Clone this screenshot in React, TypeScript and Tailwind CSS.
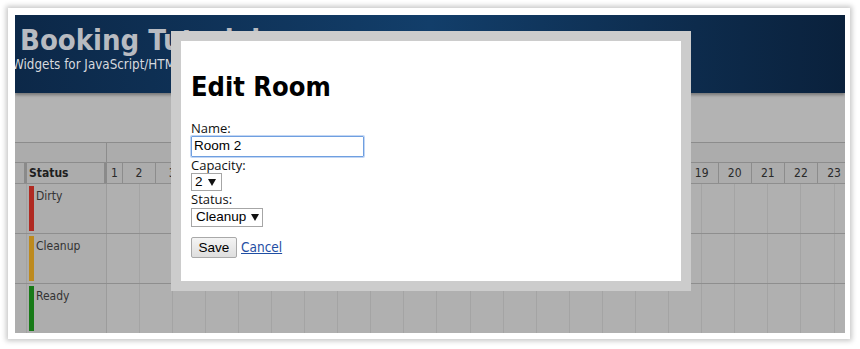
const tahoma = { fontFamily: '"DejaVu Sans Condensed", "Liberation Sans", sans-serif' }
const arial = { fontFamily: '"Liberation Sans", Arial, sans-serif' }

const rooms = [
  { name: "Dirty", bar: "bg-[#b02a22]" },
  { name: "Cleanup", bar: "bg-[#bd8a1e]" },
  { name: "Ready", bar: "bg-[#187a18]" },
]

const days = Array.from({ length: 22 }, (_, i) => i + 2)

function Arrow() {
  return (
    <svg width="8" height="7" viewBox="0 0 8 7" className="shrink-0">
      <polygon points="0,0 8,0 4,7" fill="#111" />
    </svg>
  )
}

export default function App() {
  return (
    <div className="w-[860px] h-[349px] bg-white overflow-hidden">
      <div className="ml-[8px] mt-[8px] w-[842px] h-[331px] bg-white pl-[7px] pt-[7px] shadow-[0_0_5px_2px_rgba(0,0,0,0.22)]">
        <div className="relative w-[830px] h-[318px] overflow-hidden bg-[#b3b3b3]" style={tahoma}>
          {/* Header */}
          <div className="relative z-10 h-[78px] bg-gradient-to-r from-[#0c2848] via-[#123e6a] to-[#0a213c] pl-[5px] pt-[8px] shadow-[0_2px_3px_rgba(0,0,0,0.35)]">
            <div className="text-[29px] font-bold leading-[34px] text-[#b8bbc1]">Booking Tutorial</div>
            <div className="-ml-[8px] mt-[0px] text-[13.3px] leading-[16px] text-[#d6d9de] whitespace-nowrap">Widgets for JavaScript/HTML5</div>
          </div>

          {/* Scheduler */}
          <div className="mt-[49px] text-[12px] text-[#2a2a2a]">
            <div className="flex h-[20px] border-t border-[#8c8c8c] bg-[#acacac]">
              <div className="w-[92px] shrink-0 border-r border-[#8c8c8c]" />
              <div className="flex-1" />
            </div>
            <div className="flex h-[21px] border-t border-[#8c8c8c] bg-[#acacac]">
              <div className="w-[92px] shrink-0 flex">
                <div className="w-[9px] shrink-0" />
                <div className="flex-1 flex items-center border-l-[3px] border-r-[3px] border-[#8a8a8a] pl-[2px] font-bold text-[#1e1e1e]">Status</div>
              </div>
              <div className="flex overflow-hidden">
                <div className="w-[16px] shrink-0 border-r border-[#8c8c8c] flex items-center justify-center">1</div>
                {days.map((d) => (
                  <div key={d} className="w-[33.1px] shrink-0 border-r border-[#8c8c8c] flex items-center justify-center">
                    {d}
                  </div>
                ))}
              </div>
            </div>
            {rooms.map((r) => (
              <div key={r.name} className="flex h-[50px] border-t border-[#8e8e8e] bg-[#b0b0b0]">
                <div className="w-[92px] shrink-0 flex border-r border-[#9c9c9c] bg-[#adadad]">
                  <div className="w-[12px] shrink-0 border-r border-[#a2a2a2]" />
                  <div className={`ml-[2px] my-[2px] w-[5px] shrink-0 ${r.bar}`} />
                  <div className="pl-[2px] pt-[4px] leading-[16px] text-[#333]">{r.name}</div>
                </div>
                <div className="flex overflow-hidden">
                  {Array.from({ length: 23 }, (_, i) => (
                    <div key={i} className={`${i === 0 ? "w-[32.6px]" : "w-[33.1px]"} shrink-0 border-r border-[#a4a4a4]`} />
                  ))}
                </div>
              </div>
            ))}
          </div>

          {/* Modal */}
          <div className="absolute z-20 left-[156px] top-[16px] w-[520px] h-[260px] border-[10px] border-[#cccccc] bg-white px-[10px]">
            <h1 className="mt-[30px] text-[27px] font-bold leading-[32px] text-black">Edit Room</h1>
            <div className="mt-[17px] text-[13px] text-[#111]" style={{ fontFamily: '"Open Sans", "Liberation Sans", sans-serif' }}>
              <div className="leading-[16px]">Name:</div>
              <div
                className="w-[173px] h-[21px] border border-[#6f9fe0] rounded-[1px] shadow-[0_0_0_1px_rgba(120,165,230,0.45)] flex items-center pl-[2px] text-[13.5px] text-black"
                style={arial}
              >
                Room 2
              </div>
              <div className="leading-[16px]">Capacity:</div>
              <div className="w-[31px] h-[18px] border border-[#a6a6a6] flex items-center gap-[5px] pl-[3px] text-[13.5px] text-black" style={arial}>
                <span>2</span>
                <Arrow />
              </div>
              <div className="leading-[16px]">Status:</div>
              <div className="mt-[1px] w-[72px] h-[19px] border border-[#a6a6a6] flex items-center gap-[5px] pl-[4px] text-[13.5px] text-black" style={arial}>
                <span>Cleanup</span>
                <Arrow />
              </div>
              <div className="mt-[10px] flex items-center gap-[4px]" style={arial}>
                <button className="w-[46px] h-[21px] border border-[#a9a9a9] rounded-[2px] bg-gradient-to-b from-[#f4f4f4] to-[#dedede] text-[13.5px] text-black leading-none">
                  Save
                </button>
                <a className="text-[13.5px] text-[#1f4ea3] underline cursor-pointer" style={tahoma}>
                  Cancel
                </a>
              </div>
            </div>
          </div>
        </div>
      </div>
    </div>
  )
}
